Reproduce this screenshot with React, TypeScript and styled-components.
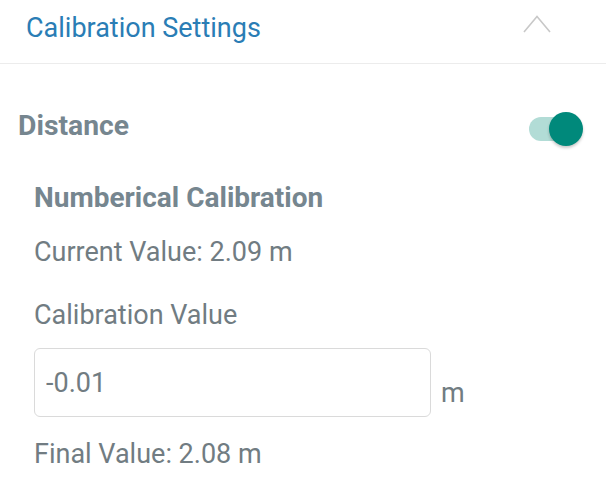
import * as React from 'react'
import styled, { createGlobalStyle } from 'styled-components'

const TITLE_BLUE = '#2a7db5'
const HEADING_GRAY = '#76868f'
const TEXT_GRAY = '#717c82'
const DIVIDER = '#ececec'
const TEAL = '#00897b'
const TEAL_LIGHT = '#b2dcd6'

const GlobalStyle = createGlobalStyle`
  body {
    margin: 0;
    background: #fff;
    font-family: Roboto, 'Noto Sans', sans-serif;
  }
`

const Panel = styled.div`
  width: 606px;
  height: 478px;
  overflow: hidden;
  background: #fff;
`
const Header = styled.div`
  display: flex;
  align-items: center;
  justify-content: space-between;
  padding: 12px 55px 19px 26px;
  border-bottom: 1px solid ${DIVIDER};
`
const Title = styled.div`
  color: ${TITLE_BLUE};
  font-size: 27px;
  line-height: 32px;
`
const Chevron = styled.svg`
  display: block;
  margin-top: -8px;
`
const SwitchRow = styled.div`
  display: flex;
  align-items: center;
  justify-content: space-between;
  margin-top: 43px;
  padding: 0 23px 0 18px;
  height: 40px;
`
const SwitchLabel = styled.div`
  color: ${HEADING_GRAY};
  font-size: 28.3px;
  font-weight: 700;
  line-height: 36px;
  margin-top: -2px;
`
const Toggle = styled.div`
  position: relative;
  width: 54px;
  height: 34px;
  margin-top: 4px;
`
const Track = styled.div`
  position: absolute;
  left: 0;
  top: 5px;
  width: 50px;
  height: 24px;
  border-radius: 12px;
  background: ${TEAL_LIGHT};
`
const Knob = styled.div`
  position: absolute;
  right: 0;
  top: 0;
  width: 34px;
  height: 34px;
  border-radius: 50%;
  background: ${TEAL};
  box-shadow: 0 2px 3px rgba(0, 0, 0, 0.22);
`
const Body = styled.div`
  display: flex;
  flex-direction: column;
  padding-left: 34px;
`
const SubHeading = styled.div`
  color: ${HEADING_GRAY};
  font-size: 28px;
  font-weight: 700;
  line-height: 34px;
  margin-top: 34px;
`
const Line = styled.div<{ $gap: number }>`
  color: ${TEXT_GRAY};
  font-size: 27px;
  line-height: 32px;
  margin-top: ${(p) => p.$gap}px;
`
const InputRow = styled.div`
  display: flex;
  align-items: flex-end;
  gap: 10px;
  margin-top: 17px;
`
const Input = styled.input`
  box-sizing: border-box;
  width: 397px;
  height: 69px;
  padding: 0 0 0 11px;
  border: 1px solid #dadada;
  border-radius: 6px;
  outline: none;
  color: ${TEXT_GRAY};
  font-family: Roboto, 'Noto Sans', sans-serif;
  font-size: 27px;
  background: #fff;
`
const Unit = styled.div`
  color: ${TEXT_GRAY};
  font-size: 27px;
  line-height: 32px;
  margin-bottom: 8px;
`

export default function App() {
  return (
    <Panel>
      <GlobalStyle />
      <Header>
        <Title>Calibration Settings</Title>
        <Chevron width="28" height="18" viewBox="0 0 28 18">
          <polyline
            points="1,17 14,1.5 27,17"
            fill="none"
            stroke="#c8c8c8"
            strokeWidth="1.6"
          />
        </Chevron>
      </Header>
      <SwitchRow>
        <SwitchLabel>Distance</SwitchLabel>
        <Toggle>
          <Track />
          <Knob />
        </Toggle>
      </SwitchRow>
      <Body>
        <SubHeading>Numberical Calibration</SubHeading>
        <Line $gap={21}>Current Value: 2.09 m</Line>
        <Line $gap={31}>Calibration Value</Line>
        <InputRow>
          <Input defaultValue="-0.01" />
          <Unit>m</Unit>
        </InputRow>
        <Line $gap={21}>Final Value: 2.08 m</Line>
      </Body>
    </Panel>
  )
}
